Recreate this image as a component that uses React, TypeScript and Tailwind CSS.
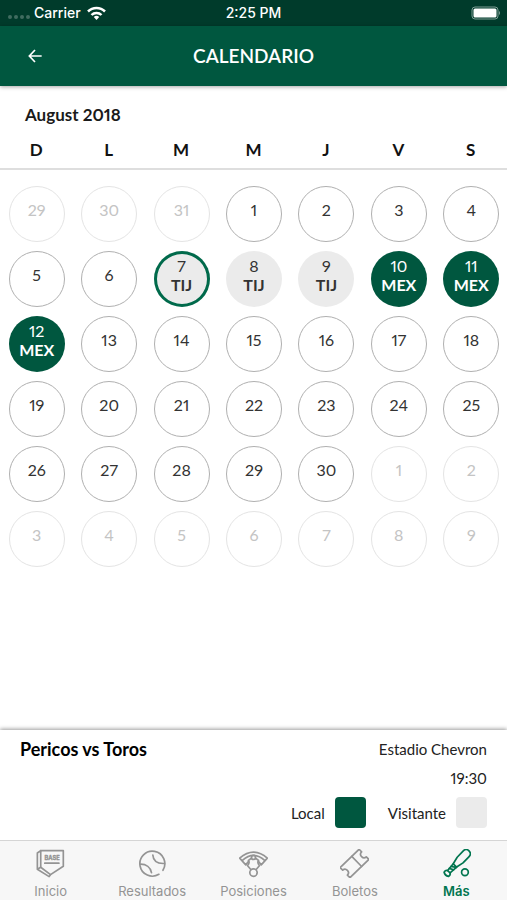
import { clsx } from "clsx";

interface Day {
  day: number;
  outside?: boolean;
  team?: string;
  home?: boolean;
  selected?: boolean;
}

const weekdays = ["D", "L", "M", "M", "J", "V", "S"];

const games: Record<number, { team: string; home: boolean }> = {
  7: { team: "TIJ", home: false },
  8: { team: "TIJ", home: false },
  9: { team: "TIJ", home: false },
  10: { team: "MEX", home: true },
  11: { team: "MEX", home: true },
  12: { team: "MEX", home: true },
};

function buildWeeks(selected: number) {
  const days: Day[] = [];
  for (let d = 29; d <= 31; d++) days.push({ day: d, outside: true });
  for (let d = 1; d <= 30; d++) {
    days.push({ day: d, ...games[d], selected: d === selected });
  }
  for (let d = 1; d <= 9; d++) days.push({ day: d, outside: true });

  const weeks: Day[][] = [];
  for (let i = 0; i < days.length; i += 7) weeks.push(days.slice(i, i + 7));
  return weeks;
}

function StatusBar() {
  return (
    <div className="grid h-[26px] grid-cols-3 items-center bg-[#003b2b] px-2 font-['Inter','Liberation_Sans',sans-serif] text-sm text-white">
      <div className="flex items-center gap-1.5">
        <span className="flex gap-0.5 pt-2">
          {[0, 1, 2, 3].map((i) => (
            <span key={i} className="size-1 rounded-full bg-white/25" />
          ))}
        </span>
        <span className="-ml-0.5 font-medium">Carrier</span>
        <svg viewBox="0 0 38 28" className="h-3.5 w-[19px]" fill="none" stroke="currentColor" strokeWidth="5">
          <path d="M2 11a24 24 0 0 1 34 0" />
          <path d="M9 18a14 14 0 0 1 20 0" />
          <path d="M19 28l-5.500-6a8 8 0 0 1 11 0z" fill="currentColor" stroke="none" />
        </svg>
      </div>
      <span className="text-center font-medium">2:25 PM</span>
      <svg viewBox="0 0 60 28" className="-mr-0.5 h-3.5 w-[30px] justify-self-end" fill="none">
        <rect x="2" y="2" width="52" height="24" rx="6" stroke="#7d9d94" strokeWidth="2" />
        <rect x="5" y="5" width="46" height="18" rx="3" fill="#fff" />
        <path d="M56 10a5 5 0 0 1 0 8z" fill="#7d9d94" />
      </svg>
    </div>
  );
}

function Header() {
  return (
    <header className="relative z-10 grid h-[60px] grid-cols-[70px_1fr_70px] items-center bg-[#00573f] text-white shadow-[0_1px_4px_rgba(0,0,0,0.35)]">
      <button type="button" aria-label="Volver" className="flex h-full items-center justify-center">
        <svg viewBox="0 0 42 42" className="size-3.5" fill="none" stroke="currentColor" strokeWidth="5">
          <path d="M21 3L4 21l17 18M4 21h37" />
        </svg>
      </button>
      <h1 className="text-center text-[19px] font-semibold">CALENDARIO</h1>
    </header>
  );
}

function DayButton({ day, outside, team, home, selected }: Day) {
  return (
    <button
      type="button"
      className={clsx(
        "mx-auto flex size-14 flex-col items-center rounded-full text-base leading-[19px] proportional-nums",
        team ? "pt-[5px]" : "border pt-[13px]",
        !team && (outside ? "border-[#e4e4e4] text-[#c4c4c4]" : "border-[#b0b0b0] text-[#333]"),
        team && (home ? "bg-[#00573f] text-white" : "bg-[#ebebeb] text-[#333]"),
        selected && "ring-3 ring-[#006a4b] ring-inset"
      )}
    >
      <span>{day}</span>
      {team && <span className="font-bold">{team}</span>}
    </button>
  );
}

function Calendar() {
  return (
    <main className="flex-1">
      <h2 className="px-[25px] pt-[17px] text-[17px] leading-6 font-bold text-[#1a1a1a] proportional-nums">August 2018</h2>
      <table className="w-full table-fixed">
        <thead>
          <tr className="border-b-2 border-[#dedede]">
            {weekdays.map((name, i) => (
              <th key={i} scope="col" className="h-[42px] p-0 pt-1 text-[17px] font-bold text-[#111]">
                {name}
              </th>
            ))}
          </tr>
        </thead>
        <tbody>
          <tr aria-hidden="true" className="h-3" />
          {buildWeeks(7).map((week, i) => (
            <tr key={i}>
              {week.map((d, j) => (
                <td key={j} className="h-[65px] p-0 pl-px align-middle">
                  <DayButton {...d} />
                </td>
              ))}
            </tr>
          ))}
        </tbody>
      </table>
    </main>
  );
}

function GameInfo() {
  return (
    <section className="h-[110px] px-5 pt-[7px] text-[15px] leading-6 text-[#222] shadow-[0_-1px_4px_rgba(0,0,0,0.4)]">
      <div className="flex justify-between">
        <h3 className="text-lg leading-6 font-bold text-black">Pericos vs Toros</h3>
        <p>Estadio Chevron</p>
      </div>
      <p className="mt-[5px] text-right proportional-nums">19:30</p>
      <div className="mt-[7px] flex justify-end gap-[22px]">
        <span className="flex items-center gap-2.5">
          Local
          <span className="size-[31px] rounded-sm bg-[#00573f]" />
        </span>
        <span className="flex items-center gap-2.5">
          Visitante
          <span className="size-[31px] rounded-sm bg-[#ebebeb]" />
        </span>
      </div>
    </section>
  );
}

const tabs = [
  {
    label: "Inicio",
    icon: (
      <>
        <path d="M14 5h67v46L43 76 14 54z" />
        <path d="M14 5L4 12v48l35 22 4-6M4 60l10-6" />
        <path d="M26 42h42" />
        <text x="25" y="34" fontSize="17" fontWeight="700" fill="currentColor" strokeWidth="1">
          BASE
        </text>
      </>
    ),
  },
  {
    label: "Resultados",
    icon: (
      <>
        <path d="M62 75A37 37 0 1 1 74 63" />
        <path d="M44 18c1 16 12 26 34 25" />
        <path d="M8 45c16 0 29 9 32 25" />
      </>
    ),
  },
  {
    label: "Posiciones",
    icon: (
      <>
        <path d="M2 27Q43-8 84 27L66 47 58 37M2 27l18 20 8-10" />
        <path d="M10 34Q43 4 76 34" />
        <circle cx="43" cy="25" r="6" />
        <path d="M37 27l-9 7q5 8-3 15l10 12M49 27l9 7q-5 8 3 15L51 61" />
        <circle cx="43" cy="70" r="11" />
      </>
    ),
  },
  {
    label: "Boletos",
    icon: (
      <g transform="rotate(-44 43 43)">
        <path d="M4 22h78v11c-13 0-13 20 0 20v11H4V53c13 0 13-20 0-20z" />
        <path d="M52 22v42" />
      </g>
    ),
  },
  {
    label: "Más",
    icon: (
      <>
        <g transform="translate(12 76) rotate(-46)">
          <path d="M1-9q-6 9 0 18 8 2 11-4l26 2 22 5h26q12 0 12-12t-12-12H60L38-7 12-5Q9-11 1-9z" />
          <path d="M12-5v10M20-6l6 12M28-6l8 13M38-7v14" />
        </g>
        <circle cx="68" cy="69" r="10" />
      </>
    ),
    active: true,
  },
];

function TabBar() {
  return (
    <nav className="grid h-[60px] grid-cols-5 border-t border-[#d5d5d5] bg-[#f7f7f7] font-['Inter','Liberation_Sans',sans-serif]">
      {tabs.map(({ label, icon, active }) => (
        <a
          key={label}
          href="#"
          aria-current={active ? "page" : undefined}
          className={clsx(
            "flex flex-col items-center pt-2 text-[13px] leading-4",
            active ? "font-semibold text-[#00754f]" : "text-[#949494]"
          )}
        >
          <svg
            viewBox="0 0 86 86"
            className="mb-[5px] size-[29px]"
            fill="none"
            stroke="currentColor"
            strokeWidth="5"
            strokeLinejoin="round"
            strokeLinecap="round"
          >
            {icon}
          </svg>
          {label}
        </a>
      ))}
    </nav>
  );
}

function App() {
  return (
    <div className="flex min-h-screen flex-col bg-white font-['Lato','Liberation_Sans',sans-serif]">
      <StatusBar />
      <Header />
      <Calendar />
      <GameInfo />
      <TabBar />
    </div>
  );
}

export default App;
